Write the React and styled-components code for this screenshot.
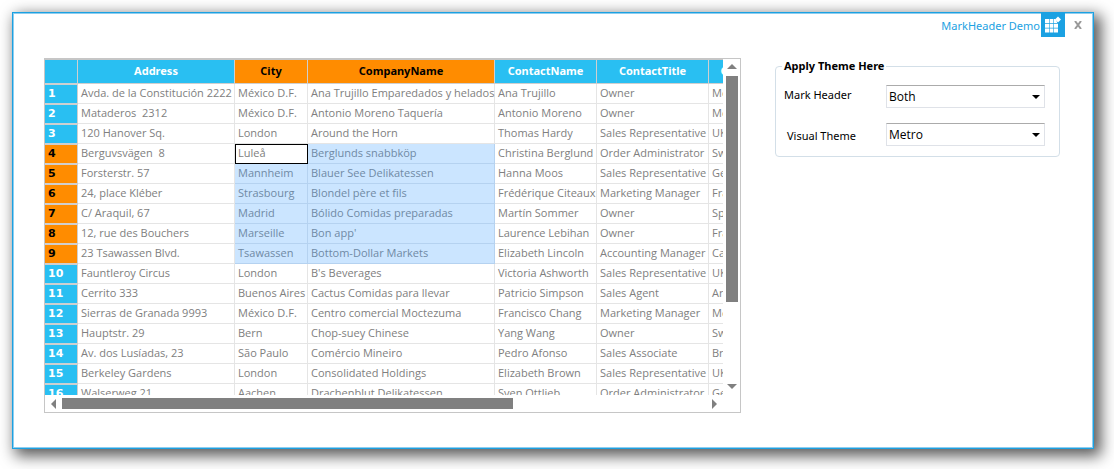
import React from "react";
import styled, { createGlobalStyle } from "styled-components";

const Global = createGlobalStyle`
  * { box-sizing: border-box; }
  body { margin: 0; background: #fff; font-family: "Open Sans", "Noto Sans", sans-serif; font-size: 11px; }
`;

const Page = styled.div`
  padding: 12px 20px 20px 12px;
`;

const Window = styled.main`
  background: #fff;
  border: 1px solid #1ba1e2;
  box-shadow: inset 0 0 0 1px #8fcdee, 5px 5px 14px 2px rgba(0, 0, 0, 0.65);
  padding: 0 33px 35px 31px;
`;

const TitleBar = styled.header`
  display: flex;
  justify-content: flex-end;
  height: 24px;
  margin-right: -29px;
`;

const Title = styled.h1`
  margin: 0 1px 0 0;
  font-family: "Noto Sans", "Open Sans", sans-serif;
  font-size: 11px;
  font-weight: 400;
  line-height: 26px;
  color: #1ba1e2;
`;

const CloseButton = styled.button`
  display: flex;
  align-items: center;
  justify-content: center;
  width: 22px;
  height: 24px;
  margin-left: 2px;
  padding: 0;
  border: 0;
  background: none;
`;

const Content = styled.div`
  display: grid;
  grid-template-columns: minmax(0, 1fr) 285px;
  column-gap: 34px;
  align-items: start;
  padding-top: 21px;
`;

const GridFrame = styled.section`
  display: grid;
  grid-template-columns: minmax(0, 1fr) 17px;
  grid-template-rows: 336px 17px;
  border: 1px solid #c6c6c6;
`;

const Viewport = styled.div`
  overflow: hidden;
  border-top: 1px solid #c6c6c6;
`;

const Table = styled.table`
  width: 732px;
  table-layout: fixed;
  border-collapse: separate;
  border-spacing: 0;
`;

const ColumnHeader = styled.th`
  height: 24px;
  padding: 0;
  border-right: 1px solid #cfcfcf;
  border-bottom: 1px solid #cfcfcf;
  background: ${(p) => (p.$marked ? "#ff8c00" : "#29bff2")};
  color: ${(p) => (p.$marked ? "#000" : "#fff")};
  font-family: "Noto Sans", "Open Sans", sans-serif;
  font-weight: 700;
  line-height: 21px;
  vertical-align: top;
`;

const RowHeader = styled.th`
  height: 20px;
  padding: 0 3px;
  border-right: 1px solid #cfcfcf;
  border-top: 1px solid #cfcfcf;
  border-bottom: 1px solid #cfcfcf;
  background: ${(p) => (p.$marked ? "#ff8c00" : "#29bff2")};
  color: ${(p) => (p.$marked ? "#000" : "#fff")};
  font-family: "DejaVu Sans", "Noto Sans", sans-serif;
  font-weight: 700;
  line-height: 17px;
  text-align: left;
  vertical-align: top;
`;

const Cell = styled.td`
  height: 20px;
  padding: 0 0 0 3px;
  border-right: 1px solid ${(p) => (p.$selected ? "#b5d2f0" : "#e5e5e5")};
  border-bottom: 1px solid ${(p) => (p.$selected ? "#b5d2f0" : "#e5e5e5")};
  background: ${(p) => (p.$selected ? "#cbe5ff" : "#fff")};
  color: ${(p) => (p.$selected ? "#708aa5" : "#808080")};
  outline: ${(p) => (p.$current ? "1px solid #000" : "none")};
  outline-offset: -1px;
  line-height: 18px;
  vertical-align: top;
  white-space: pre;
`;

const VerticalBar = styled.div`
  display: flex;
  flex-direction: column;
  align-items: center;
  padding: 5px 2px 6px 3px;
`;

const HorizontalBar = styled.div`
  display: flex;
  align-items: center;
  padding: 3px 6px;
`;

const Track = styled.div`
  flex: 1;
  display: flex;
  flex-direction: ${(p) => (p.$vertical ? "column" : "row")};
  align-self: stretch;
  margin: ${(p) => (p.$vertical ? "7px 0" : "0 6px")};
`;

const Thumb = styled.div`
  flex: 0 0 ${(p) => p.$size};
  background: #808080;
`;

const Arrow = styled.svg`
  display: block;
  fill: #808080;
`;

const ThemeGroup = styled.fieldset`
  min-width: 0;
  margin: 0;
  padding: 11px 14px 10px 7px;
  border: 1px solid #d3dfe8;
  border-radius: 4px;
`;

const Legend = styled.legend`
  margin-left: -1px;
  padding: 0 2px;
  font-family: "Noto Sans", "Open Sans", sans-serif;
  font-weight: 700;
  line-height: 16px;
`;

const Field = styled.div`
  display: flex;
  justify-content: space-between;
  height: 23px;

  & + & { margin-top: 15px; }
`;

const Label = styled.label`
  padding-left: ${(p) => (p.$indent ? "4px" : "1px")};
  font-family: "Noto Sans", "Open Sans", sans-serif;
  line-height: ${(p) => (p.$indent ? "26px" : "20px")};
`;

const SelectBox = styled.div`
  display: grid;
  width: 159px;
  height: 23px;
  border: 1px solid #dfe2e8;
  border-top-color: #ababab;

  & > * { grid-area: 1 / 1; }
`;

const Select = styled.select`
  appearance: none;
  width: 100%;
  padding: 0 20px 0 2px;
  border: 0;
  background: #fff;
  color: #000;
  font: inherit;
  font-size: 12px;
  line-height: 20px;
`;

const DropArrow = styled.svg`
  justify-self: end;
  align-self: center;
  margin-right: 4px;
  pointer-events: none;
`;

const columns = [
  ["Address", 157],
  ["City", 73],
  ["CompanyName", 187],
  ["ContactName", 102],
  ["ContactTitle", 112],
  ["Country", 68],
];

const rows = [
  ["Avda. de la Constitución 2222", "México D.F.", "Ana Trujillo Emparedados y helados", "Ana Trujillo", "Owner", "Mexico"],
  ["Mataderos  2312", "México D.F.", "Antonio Moreno Taquería", "Antonio Moreno", "Owner", "Mexico"],
  ["120 Hanover Sq.", "London", "Around the Horn", "Thomas Hardy", "Sales Representative", "UK"],
  ["Berguvsvägen  8", "Luleå", "Berglunds snabbköp", "Christina Berglund", "Order Administrator", "Sweden"],
  ["Forsterstr. 57", "Mannheim", "Blauer See Delikatessen", "Hanna Moos", "Sales Representative", "Germany"],
  ["24, place Kléber", "Strasbourg", "Blondel père et fils", "Frédérique Citeaux", "Marketing Manager", "France"],
  ["C/ Araquil, 67", "Madrid", "Bólido Comidas preparadas", "Martín Sommer", "Owner", "Spain"],
  ["12, rue des Bouchers", "Marseille", "Bon app'", "Laurence Lebihan", "Owner", "France"],
  ["23 Tsawassen Blvd.", "Tsawassen", "Bottom-Dollar Markets", "Elizabeth Lincoln", "Accounting Manager", "Canada"],
  ["Fauntleroy Circus", "London", "B's Beverages", "Victoria Ashworth", "Sales Representative", "UK"],
  ["Cerrito 333", "Buenos Aires", "Cactus Comidas para llevar", "Patricio Simpson", "Sales Agent", "Argentina"],
  ["Sierras de Granada 9993", "México D.F.", "Centro comercial Moctezuma", "Francisco Chang", "Marketing Manager", "Mexico"],
  ["Hauptstr. 29", "Bern", "Chop-suey Chinese", "Yang Wang", "Owner", "Switzerland"],
  ["Av. dos Lusíadas, 23", "São Paulo", "Comércio Mineiro", "Pedro Afonso", "Sales Associate", "Brazil"],
  ["Berkeley Gardens", "London", "Consolidated Holdings", "Elizabeth Brown", "Sales Representative", "UK"],
  ["Walserweg 21", "Aachen", "Drachenblut Delikatessen", "Sven Ottlieb", "Order Administrator", "Germany"],
];

const selection = { top: 3, bottom: 8, left: 1, right: 2 };
const rowMarked = (r) => r >= selection.top && r <= selection.bottom;
const columnMarked = (c) => c >= selection.left && c <= selection.right;

function AppIcon() {
  return (
    <svg width="24" height="24" viewBox="0 0 24 24" aria-hidden="true">
      <rect width="24" height="24" fill="#1ba1e2" />
      <path
        fill="#fff"
        d="M4 6h4v4H4zM8.6 6h3.8v4H8.6zM13 6h1.4l1.6 3v1h-3zM4 10.7h4v4H4zM8.6 10.7h3.8v4H8.6zM13 10.7h4v4h-4zM4 15.4h4v4H4zM8.6 15.4h3.8v4H8.6zM13 15.4h4v4h-4z"
      />
      <path fill="#fff" d="M17 3.6l3 3-3 3-3-3z" />
    </svg>
  );
}

function DataGrid() {
  return (
    <GridFrame aria-label="Customers">
      <Viewport>
        <Table>
          <colgroup>
            <col style={{ width: 33 }} />
            {columns.map(([name, width]) => (
              <col key={name} style={{ width }} />
            ))}
          </colgroup>
          <thead>
            <tr>
              <ColumnHeader />
              {columns.map(([name], c) => (
                <ColumnHeader key={name} scope="col" $marked={columnMarked(c)}>{name}</ColumnHeader>
              ))}
            </tr>
          </thead>
          <tbody>
            {rows.map((row, r) => (
              <tr key={r}>
                <RowHeader scope="row" $marked={rowMarked(r)}>{r + 1}</RowHeader>
                {row.map((value, c) => {
                  const current = r === selection.top && c === selection.left;
                  return (
                    <Cell key={c} $current={current} $selected={!current && rowMarked(r) && columnMarked(c)}>
                      {value}
                    </Cell>
                  );
                })}
              </tr>
            ))}
          </tbody>
        </Table>
      </Viewport>
      <VerticalBar>
        <Arrow width="10" height="5"><path d="M0 5L5 0L10 5z" /></Arrow>
        <Track $vertical><Thumb $size="75%" /></Track>
        <Arrow width="10" height="5"><path d="M0 0L5 5L10 0z" /></Arrow>
      </VerticalBar>
      <HorizontalBar>
        <Arrow width="5" height="10"><path d="M5 0L0 5L5 10z" /></Arrow>
        <Track><Thumb $size="70%" /></Track>
        <Arrow width="5" height="10"><path d="M0 0L5 5L0 10z" /></Arrow>
      </HorizontalBar>
    </GridFrame>
  );
}

function ThemeField({ id, label, options, indent }) {
  return (
    <Field>
      <Label htmlFor={id} $indent={indent}>{label}</Label>
      <SelectBox>
        <Select id={id} defaultValue={options[0]}>
          {options.map((o) => <option key={o}>{o}</option>)}
        </Select>
        <DropArrow width="8" height="4" aria-hidden="true"><path d="M0 0h8L4 4z" /></DropArrow>
      </SelectBox>
    </Field>
  );
}

export default function App() {
  return (
    <Page>
      <Global />
      <Window>
        <TitleBar>
          <Title>MarkHeader Demo</Title>
          <AppIcon />
          <CloseButton aria-label="Close">
            <svg width="8" height="8" viewBox="0 0 8 8"><path d="M1 0l6 8M7 0L1 8" stroke="#999" strokeWidth="2" /></svg>
          </CloseButton>
        </TitleBar>
        <Content>
          <DataGrid />
          <ThemeGroup>
            <Legend>Apply Theme Here</Legend>
            <ThemeField id="mark-header" label="Mark Header" options={["Both", "Row", "Column", "None"]} />
            <ThemeField id="visual-theme" label="Visual Theme" options={["Metro", "Office2010"]} indent />
          </ThemeGroup>
        </Content>
      </Window>
    </Page>
  );
}
